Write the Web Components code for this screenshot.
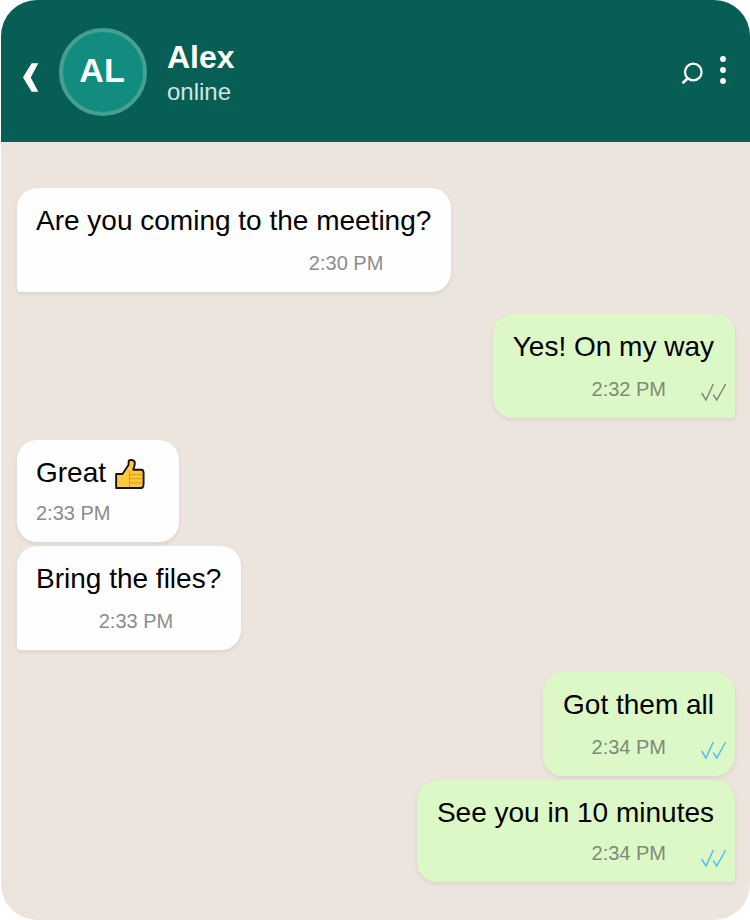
<!DOCTYPE html>
<html>
<head>
<meta charset="utf-8">
<style>
  html, body { margin: 0; background: #fff; }
  body { font-family: "Liberation Sans", Arial, sans-serif; }
</style>
</head>
<body>
<chat-window>
  <chat-header slot="header" name="Alex" status="online" initials="AL"></chat-header>
  <chat-bubble time="2:30 PM" tail style="margin-top:46px">Are you coming to the meeting?</chat-bubble>
  <chat-bubble out ticks="sent" time="2:32 PM" tail style="margin-top:22px">Yes! On my way</chat-bubble>
  <chat-bubble time="2:33 PM" tight style="margin-top:22px">Great <thumbs-up></thumbs-up></chat-bubble>
  <chat-bubble time="2:33 PM" tail style="margin-top:4px">Bring the files?</chat-bubble>
  <chat-bubble out ticks="read" time="2:34 PM" style="margin-top:22px">Got them all</chat-bubble>
  <chat-bubble out ticks="read" time="2:34 PM" tail tight style="margin-top:4px">See you in 10 minutes</chat-bubble>
</chat-window>

<script>
  customElements.define(
    'chat-window',
    class extends HTMLElement {
      constructor() {
        super()
        this.attachShadow({ mode: 'open' })
        this.shadowRoot.innerHTML = `
        <style>
          :host {
            display: flex;
            flex-direction: column;
            box-sizing: border-box;
            width: 749px;
            height: 920px;
            margin-left: 1px;
            background: #ece5dd;
            border-radius: 36px;
          }
          .messages {
            display: flex;
            flex-direction: column;
            align-items: flex-start;
            padding: 0 15px 0 16px;
          }
        </style>
        <slot name="header"></slot>
        <div class="messages"><slot></slot></div>
      `
      }
    }
  )

  customElements.define(
    'chat-header',
    class extends HTMLElement {
      constructor() {
        super()
        this.attachShadow({ mode: 'open' })
      }
      connectedCallback() {
        this.shadowRoot.innerHTML = `
        <style>
          :host {
            display: flex;
            align-items: center;
            box-sizing: border-box;
            height: 142px;
            padding: 0 22px 0 20px;
            background: #075e54;
            border-radius: 36px 36px 0 0;
            color: #fff;
          }
          .back { margin: 14px 20px 0 0; flex: none; }
          .avatar {
            box-sizing: border-box;
            width: 88px;
            height: 88px;
            margin-top: 2px;
            padding: 0 2px 3px 0;
            border-radius: 50%;
            border: 4px solid #46a090;
            background: #128c7e;
            display: flex;
            align-items: center;
            justify-content: center;
            font-size: 34px;
            font-weight: bold;
          }
          .who { margin: 2px 0 0 20px; flex: 1; }
          .name { font-size: 32px; font-weight: bold; line-height: 37px; }
          .status { font-size: 24px; line-height: 28px; color: #d2e6e2; margin-top: 2px; }
          .actions { display: flex; align-items: center; gap: 12.7px; margin-top: -1.4px; }
        </style>
        <svg class="back" width="18" height="30" viewBox="0 0 18 30" fill="#fff">
          <polygon points="17.3,0.3 10.7,0.3 2.3,13.7 2.3,15 10.7,28.7 17.3,28.7 9.7,14.4"/>
        </svg>
        <div class="avatar">${this.getAttribute('initials')}</div>
        <div class="who">
          <div class="name">${this.getAttribute('name')}</div>
          <div class="status">${this.getAttribute('status')}</div>
        </div>
        <div class="actions">
          <svg width="24" height="24" viewBox="0 0 24 24" fill="none" stroke="#fff" style="margin-top:7px">
            <circle cx="12.3" cy="10" r="8.3" stroke-width="2.2"/>
            <path d="M6.5 16.5 1.5 21.3" stroke-width="2.6"/>
          </svg>
          <svg width="10" height="32" viewBox="0 0 10 32" fill="#fff">
            <circle cx="5" cy="5" r="2.9"/>
            <circle cx="5" cy="16" r="2.9"/>
            <circle cx="5" cy="27" r="2.9"/>
          </svg>
        </div>
      `
      }
    }
  )

  customElements.define(
    'thumbs-up',
    class extends HTMLElement {
      constructor() {
        super()
        this.attachShadow({ mode: 'open' })
        this.shadowRoot.innerHTML = `
        <style>
          :host { display: inline-block; width: 30px; height: 33px; vertical-align: -8px; margin-left: 1px; }
          svg { display: block; }
        </style>
        <svg width="30" height="33" viewBox="0 0 32 33" preserveAspectRatio="none">
          <path d="M1.2 17H8L14.5 7.7V4.6C14.5 2.2 21.2 2.2 21.2 6 21.2 8 20.3 10.5 19.5 12.7H27.9C29.5 12.7 30.5 14 30.5 16V26C30.5 29 29.5 31 27.9 31H1.2Z" fill="#ffc83d" stroke="#111" stroke-width="2" stroke-linejoin="round"/>
          <path d="M15.5 13.7V30M15.5 17.7H29.5M15.5 21.7H29.5M15.5 26H29.5" fill="none" stroke="#e8960c" stroke-width="1"/>
        </svg>
      `
      }
    }
  )

  customElements.define(
    'chat-bubble',
    class extends HTMLElement {
      constructor() {
        super()
        this.attachShadow({ mode: 'open' })
      }
      connectedCallback() {
        const ticks = this.getAttribute('ticks')
        const tickColor = ticks === 'read' ? '#53bdeb' : '#7d8a7c'
        const tickSvg = ticks
          ? `<svg width="26" height="18" viewBox="0 0 26 18" fill="none" stroke="${tickColor}" stroke-width="1.5">
               <path d="M1.7 10 6 17 13.3 1"/>
               <path d="M13.3 11.7 16.7 17 25.7 1"/>
             </svg>`
          : ''
        this.shadowRoot.innerHTML = `
        <style>
          :host {
            display: block;
            box-sizing: border-box;
            padding: 17px 20px 0 19px;
            height: 104px;
            background: #fefefe;
            border-radius: 20px;
            box-shadow: 0 2px 4px rgba(0, 0, 0, 0.08);
            font-size: 28px;
            line-height: 31px;
            color: #000;
            white-space: nowrap;
          }
          :host([tail]) { border-bottom-left-radius: 4px; }
          :host([out]) {
            align-self: flex-end;
            padding: 17px 21px 0 20px;
            background: #dcf8c6;
          }
          :host([out][tail]) { border-bottom-left-radius: 20px; border-bottom-right-radius: 4px; }
          :host([tight]) { height: 102px; }
          .text { height: 31px; }
          .meta {
            display: flex;
            justify-content: flex-end;
            align-items: flex-start;
            margin-top: 16px;
            height: 26px;
            margin-right: -12px;
          }
          :host([tight]:not([out])) .meta { margin-right: -11px; }
          :host([tight]) .time { margin-top: -2px; }
          .time { font-size: 20px; line-height: 23px; color: #8c8c8c; }
          :host([out]) .time { color: #7d8a7c; }
          .tick { width: 26px; height: 18px; margin-left: 34px; margin-top: 5px; }
          .tick svg { display: block; }
        </style>
        <div class="text"><slot></slot></div>
        <div class="meta">
          <span class="time">${this.getAttribute('time')}</span>
          <span class="tick">${tickSvg}</span>
        </div>
      `
      }
    }
  )
</script>
</body>
</html>
